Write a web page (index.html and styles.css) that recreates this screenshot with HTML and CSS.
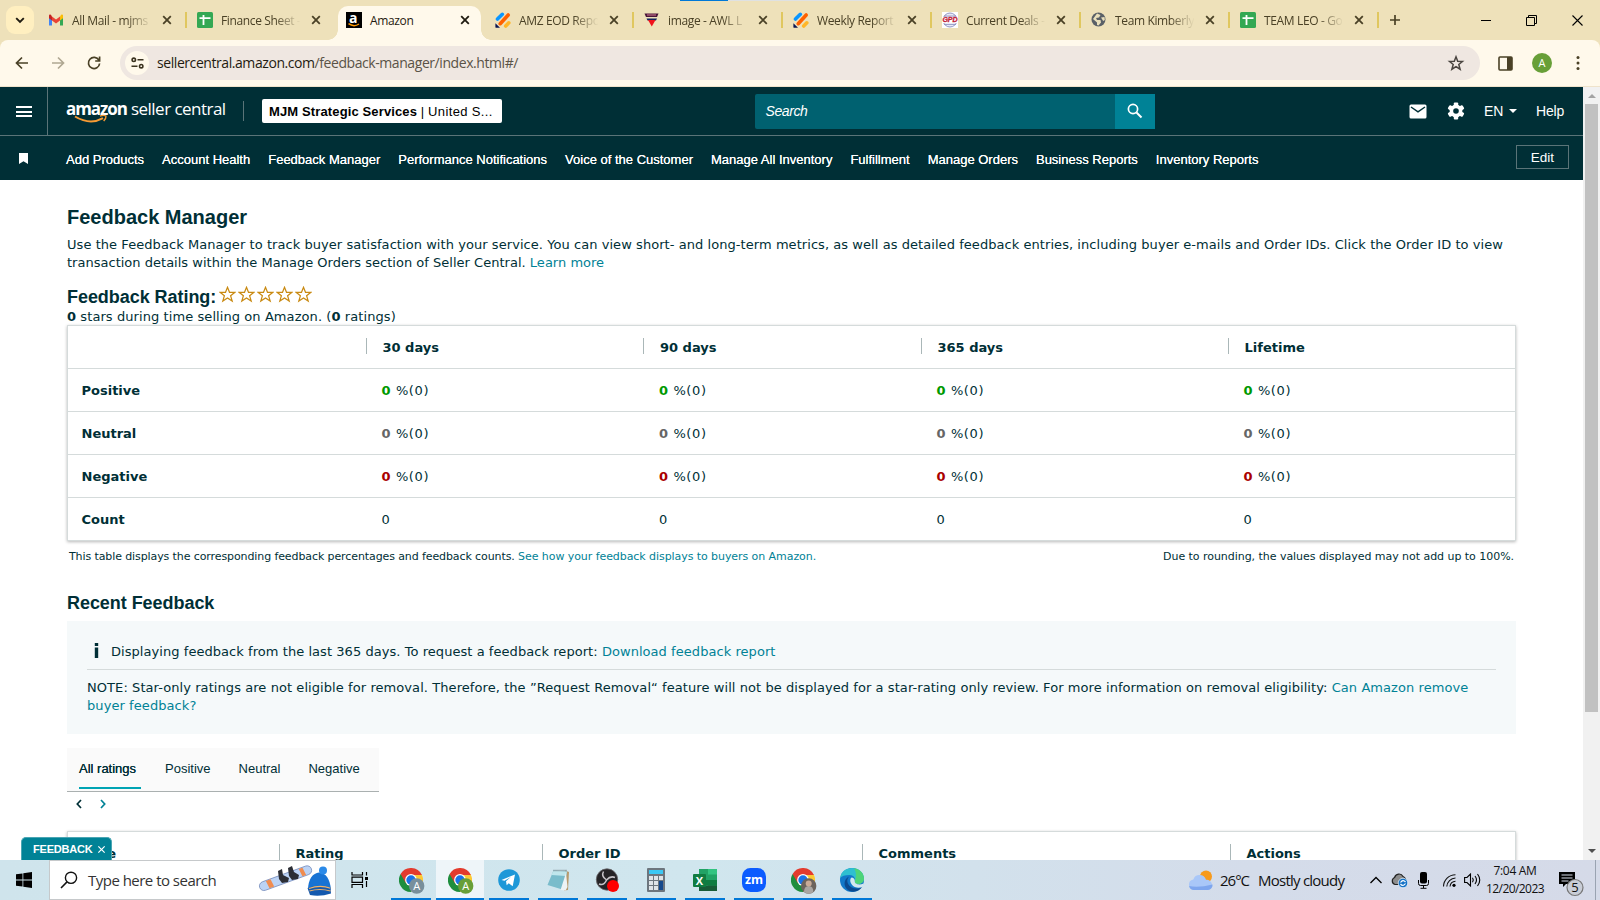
FILE: index.html
```html
<!DOCTYPE html>
<html lang="en">
<head>
<meta charset="utf-8">
<title>Amazon</title>
<link rel="stylesheet" href="styles.css">
</head>
<body>
<svg class="defs" aria-hidden="true">
  <symbol id="x" viewBox="0 0 10 10"><path d="M1.200 1.200l7.600 7.600M8.800 1.200L1.200 8.800" fill="none" stroke="currentColor" stroke-width="1.800"/></symbol>
  <symbol id="sheets" viewBox="0 0 16 16"><rect width="16" height="16" rx="1.500" fill="#34a853"/><path d="M6.500 3v10M2.500 6.200h11" stroke="#fff" stroke-width="1.800" fill="none"/></symbol>
  <symbol id="jot" viewBox="0 0 16 16"><g stroke-width="3.600" stroke-linecap="round" fill="none"><path d="M2.500 7L7.300 2.300" stroke="#0a96ff"/><path d="M5.200 11.700L13.200 3" stroke="#ff6100"/><path d="M10.700 14L13.800 10.800" stroke="#ffb629"/></g><path d="M.4 11.200L5 15.800H1.300a.9.9 0 0 1-.9-.9z" fill="#0a1551"/></symbol>
  <symbol id="star" viewBox="0 0 17 17"><path d="M8.500 1.300l2 5h5.400l-4.300 3.400 1.600 5.400-4.700-3.200-4.700 3.200 1.600-5.400L1.100 6.300h5.400z" fill="none" stroke="#c98a12" stroke-width="1.200"/></symbol>
  <symbol id="chrome" viewBox="0 0 24 24"><path d="M12 12V24A12 12 0 0 1 1.600 6z" fill="#1e8e3e"/><path d="M12 6h10.400A12 12 0 0 1 12 24l5-9z" fill="#fcc934"/><path d="M1.600 6L6.800 15 12 7h10.900A12 12 0 0 0 1.600 6z" fill="#e33b2e"/><circle cx="12" cy="12" r="5.900" fill="#fff"/><circle cx="12" cy="12" r="4.700" fill="#1a73e8"/></symbol>
</svg>

<div class="tabstrip">
  <div class="tabsearch"><svg width="10" height="7" viewBox="0 0 10 7"><path d="M1.200 1.200L5 5l3.800-3.800" fill="none" stroke="#1f1b10" stroke-width="1.900"/></svg></div>
  <div class="tab"><svg class="fav" viewBox="0 0 16 16"><path d="M1 3v10.500h3V6z" fill="#4285f4"/><path d="M15 3v10.500h-3V6z" fill="#34a853"/><path d="M1 3.500v2.800l3 2.200V4.500L3 3C2 2.200 1 2.500 1 3.500z" fill="#c5221f"/><path d="M4 4.500l4 3 4-3v4l-4 3-4-3z" fill="#ea4335"/><path d="M15 3.500v2.800l-3 2.200V4.500L13 3c1-.8 2-.5 2 .5z" fill="#fbbc04"/></svg><span class="name">All Mail - mjms</span><svg class="close"><use href="#x"/></svg></div>
  <div class="tab nosep"><svg class="fav"><use href="#sheets"/></svg><span class="name">Finance Sheet -</span><svg class="close"><use href="#x"/></svg></div>
  <div class="tab active"><svg class="fav" viewBox="0 0 16 16"><rect width="16" height="16" fill="#000"/><text x="3" y="10.800" class="fava">a</text><path d="M2.500 11.700q5.500 3.800 10.500.3" fill="none" stroke="#f90" stroke-width="1.500"/></svg><span class="name">Amazon</span><svg class="close"><use href="#x"/></svg></div>
  <div class="tab"><svg class="fav"><use href="#jot"/></svg><span class="name">AMZ EOD Repo</span><svg class="close"><use href="#x"/></svg></div>
  <div class="tab"><svg class="fav" viewBox="0 0 16 16"><path d="M.5 1.500h14L13 5H2z" fill="#4a1638"/><path d="M2.500 6.500h10.500L12 8.500H3.500z" fill="#14225c"/><path d="M4 8h7.500L7.800 14.500z" fill="#f0121c"/><path d="M3 3h9" stroke="#d77c94" stroke-width="1"/></svg><span class="name">image - AWL L</span><svg class="close"><use href="#x"/></svg></div>
  <div class="tab"><svg class="fav"><use href="#jot"/></svg><span class="name">Weekly Report</span><svg class="close"><use href="#x"/></svg></div>
  <div class="tab"><svg class="fav" viewBox="0 0 16 16"><rect width="16" height="16" fill="#fff"/><circle cx="8" cy="8" r="7" fill="#e9eaf6" stroke="#8a8fc0" stroke-width=".9"/><path d="M2 4h12M2 12.500h12" stroke="#8a8fc0" stroke-width=".8"/><rect y="5" width="16" height="6" fill="#fff"/><text x=".4" y="10.300" class="favg" textLength="15.200" lengthAdjust="spacingAndGlyphs">GPD</text></svg><span class="name">Current Deals -</span><svg class="close"><use href="#x"/></svg></div>
  <div class="tab"><svg class="fav" viewBox="0 0 16 16"><circle cx="7.500" cy="7.500" r="7" fill="#5a6067"/><path d="M6 1.500L9.500 3 8 5.500 5 6 6 8H9.500l.5 2.500-2.500 3-1.500-.5V10.500L2 7z" fill="#e9dfbb"/><path d="M10 5.500l3.500-.5.3 3-1.600 1z" fill="#e9dfbb"/></svg><span class="name">Team Kimberly</span><svg class="close"><use href="#x"/></svg></div>
  <div class="tab"><svg class="fav"><use href="#sheets"/></svg><span class="name">TEAM LEO - Go</span><svg class="close"><use href="#x"/></svg></div>
  <svg class="newtab" viewBox="0 0 10 10"><path d="M5 0v10M0 5h10" stroke="#4a4126" stroke-width="1.700"/></svg>
  <div class="winbtns">
    <svg width="10" height="10" viewBox="0 0 10 10"><path d="M0 5.500h10" stroke="#000"/></svg>
    <svg width="11" height="11" viewBox="0 0 11 11"><path d="M.5 2.500h8v8h-8zM2.500 2.500v-2h8v8h-2" fill="none" stroke="#000"/></svg>
    <svg width="11" height="11" viewBox="0 0 11 11"><path d="M.5.5l10 10M10.500.5l-10 10" stroke="#000" stroke-width="1.100"/></svg>
  </div>
  <div class="sharebar"><i></i></div>
</div>

<div class="toolbar">
  <svg class="nav" viewBox="0 0 16 16"><path d="M14 8H3M8 2.500L2.500 8 8 13.500" fill="none" stroke="#4a4126" stroke-width="1.700"/></svg>
  <svg class="nav" viewBox="0 0 16 16"><path d="M2 8h11M8 2.500L13.500 8 8 13.500" fill="none" stroke="#b0a892" stroke-width="1.700"/></svg>
  <svg class="nav" viewBox="0 0 16 16"><path d="M12.900 5.200A5.600 5.600 0 1 0 13.600 8.500M13.600 1.500V6H9.200" fill="none" stroke="#4a4126" stroke-width="1.700"/></svg>
  <div class="omnibox">
    <div class="tune"><svg width="13" height="12" viewBox="0 0 13 12"><g fill="none" stroke="#3b3320" stroke-width="1.600"><circle cx="2.800" cy="2.800" r="1.700"/><path d="M6.500 2.800H12.500M.5 9.200H6.500"/><circle cx="10.200" cy="9.200" r="1.700"/></g></svg></div>
    <div class="url">sellercentral.amazon.com<span>/feedback-manager/index.html#/</span></div>
    <svg class="bm" viewBox="0 0 16 16"><path d="M8 1.800l1.700 4.400 4.800.3-3.700 3 1.300 4.700L8 11.600l-4.100 2.600 1.300-4.700-3.700-3 4.800-.3z" fill="none" stroke="#4a4540" stroke-width="1.500"/></svg>
  </div>
  <svg class="panel" viewBox="0 0 15 15"><rect x="1" y="1" width="13" height="13" rx="1" fill="none" stroke="#4a4126" stroke-width="1.600"/><path d="M9 1h5v13H9z" fill="#4a4126"/></svg>
  <div class="avatar">A</div>
  <svg class="dots" viewBox="0 0 4 16"><g fill="#4a4126"><circle cx="2" cy="2.500" r="1.500"/><circle cx="2" cy="8" r="1.500"/><circle cx="2" cy="13.500" r="1.500"/></g></svg>
</div>

<div class="viewport">
  <div class="page">
    <header class="top">
      <div class="burger"><i></i><i></i><i></i></div>
      <div class="logo"><b>amazon</b><span>seller central</span><svg class="smile" viewBox="0 0 34 9"><path d="M1 1.500q15 9 28 1.700" fill="none" stroke="#f79b34" stroke-width="2"/><path d="M26 1q4-1.200 6 0 .3 2-2.300 5" fill="none" stroke="#f79b34" stroke-width="1.400"/></svg></div>
      <div class="account"><b>MJM Strategic Services</b> | <span>United S...</span></div>
      <div class="search"><em>Search</em><div class="go"><svg width="16" height="16" viewBox="0 0 16 16"><circle cx="6" cy="6" r="4.600" fill="none" stroke="#fff" stroke-width="1.700"/><path d="M9.500 9.500l5 5" stroke="#fff" stroke-width="2"/></svg></div></div>
      <div class="tools">
        <svg width="18" height="15" viewBox="0 0 18 15"><rect x=".5" y=".5" width="17" height="14" rx="1.500" fill="#fff"/><path d="M2 3l7 4.800L16 3" fill="none" stroke="#002f36" stroke-width="1.500"/></svg>
        <svg class="gear" width="18" height="18" viewBox="0 0 18 18"><g fill="#fff"><circle cx="9" cy="9" r="6.400"/><rect x="6.800" y=".5" width="4.400" height="17" rx="1"/><rect x="6.800" y=".5" width="4.400" height="17" rx="1" transform="rotate(60 9 9)"/><rect x="6.800" y=".5" width="4.400" height="17" rx="1" transform="rotate(120 9 9)"/></g><circle cx="9" cy="9" r="2.800" fill="#002f36"/></svg>
        <span class="lang">EN</span><i class="caret"></i><span class="help">Help</span>
      </div>
    </header>
    <nav class="links">
      <svg class="flag" viewBox="0 0 9 11"><path d="M0 0h9v11L4.500 8.300 0 11z" fill="#fff"/></svg>
      <a>Add Products</a><a>Account Health</a><a>Feedback Manager</a><a>Performance Notifications</a><a>Voice of the Customer</a><a>Manage All Inventory</a><a>Fulfillment</a><a>Manage Orders</a><a>Business Reports</a><a>Inventory Reports</a>
      <span class="edit">Edit</span>
    </nav>
    <main>
      <h1>Feedback Manager</h1>
      <p class="intro"><span class="l1">Use the Feedback Manager to track buyer satisfaction with your service. You can view short- and long-term metrics, as well as detailed feedback entries, including buyer e-mails and Order IDs. Click the Order ID to view</span><br><span class="l2">transaction details within the Manage Orders section of Seller Central. <a>Learn more</a></span></p>
      <div class="rating"><h2>Feedback Rating:</h2><svg><use href="#star"/></svg><svg><use href="#star"/></svg><svg><use href="#star"/></svg><svg><use href="#star"/></svg><svg><use href="#star"/></svg></div>
      <p class="stars"><b>0</b> stars during time selling on Amazon. (<b>0</b> ratings)</p>
      <section class="grid summary">
        <div class="row head"><span></span><b>30 days</b><b>90 days</b><b>365 days</b><b>Lifetime</b></div>
        <div class="row pos"><b>Positive</b><span><b>0</b> %(0)</span><span><b>0</b> %(0)</span><span><b>0</b> %(0)</span><span><b>0</b> %(0)</span></div>
        <div class="row neu"><b>Neutral</b><span><b>0</b> %(0)</span><span><b>0</b> %(0)</span><span><b>0</b> %(0)</span><span><b>0</b> %(0)</span></div>
        <div class="row neg"><b>Negative</b><span><b>0</b> %(0)</span><span><b>0</b> %(0)</span><span><b>0</b> %(0)</span><span><b>0</b> %(0)</span></div>
        <div class="row"><b>Count</b><span>0</span><span>0</span><span>0</span><span>0</span></div>
      </section>
      <div class="notes"><span>This table displays the corresponding feedback percentages and feedback counts. <a>See how your feedback displays to buyers on Amazon.</a></span><span class="r">Due to rounding, the values displayed may not add up to 100%.</span></div>
      <h2 class="recent">Recent Feedback</h2>
      <section class="info">
        <p class="i1"><svg width="5" height="15" viewBox="0 0 5 15"><path d="M.8 0h3.400v3H.8zM.8 4.500h3.400V15H.8z" fill="#002f36"/></svg><span>Displaying feedback from the last 365 days. To request a feedback report: <a>Download feedback report</a></span></p>
        <p class="i2">NOTE: Star-only ratings are not eligible for removal. Therefore, the ”Request Removal“ feature will not be displayed for a star-rating only review. For more information on removal eligibility: <a>Can Amazon remove<br>buyer feedback?</a></p>
      </section>
      <div class="filters"><span class="on">All ratings</span><span>Positive</span><span>Neutral</span><span>Negative</span></div>
      <div class="pager"><svg viewBox="0 0 6 10"><path d="M5 1L1.300 5 5 9" fill="none" stroke="#002f36" stroke-width="1.700"/></svg><svg viewBox="0 0 6 10"><path d="M1 1l3.700 4L1 9" fill="none" stroke="#008296" stroke-width="1.700"/></svg></div>
      <section class="grid list">
        <div class="row head"><b>Date</b><b>Rating</b><b>Order ID</b><b>Comments</b><b>Actions</b></div>
      </section>
    </main>
    <div class="fb">FEEDBACK <svg viewBox="0 0 10 10"><path d="M1.500 1.500l7 7M8.500 1.500l-7 7" stroke="#fff" stroke-width="1.300"/></svg></div>
  </div>
  <div class="scroll"><i class="up"></i><div class="thumb"></div><i class="down"></i></div>
</div>

<footer class="taskbar">
  <div class="start"><svg width="16" height="16" viewBox="0 0 16 16"><path d="M0 2.300l6.500-.9v6.200H0zM7.300 1.300L16 0v7.600H7.300zM0 8.400h6.500v6.200L0 13.700zM7.300 8.400H16V16l-8.700-1.200z" fill="#000"/></svg></div>
  <div class="find">
    <svg width="18" height="18" viewBox="0 0 18 18"><circle cx="11" cy="6.800" r="5.600" fill="none" stroke="#111" stroke-width="1.400"/><path d="M7 10.900L1 17" stroke="#111" stroke-width="1.500"/></svg>
    <span>Type here to search</span>
    <svg class="snow" width="74" height="34" viewBox="0 0 74 34"><g transform="rotate(-20 27 15)"><rect x="-1" y="10.500" width="55" height="9" rx="4.500" fill="#bcd3f5" stroke="#6f86b8" stroke-width=".7"/><path d="M7 11h5l1 8H8zM42 11h4l1 8h-4z" fill="#f08c50"/></g><path d="M19 8l4-2 1 6 6 3-1 4-6 1-3-4zM29 5l4-2 2 6 5 3-1 4-6 1-3-4z" fill="#2c2e35"/><path d="M49 27C49 16 54 10 60 9.500c7 .3 11 7 12 17z" fill="#1873d4"/><circle cx="64" cy="7.500" r="4" fill="#2b8ae8"/><path d="M48.500 25q11-4 23-.5l.5 6q-11 3.500-21 1.500z" fill="#1459ae"/><path d="M50 25.500q11-4 21.500-.3M50.500 28q10-3 21 0" fill="none" stroke="#f0b46c" stroke-width="1.200"/></svg>
  </div>
  <div class="taskview"><svg width="17" height="16" viewBox="0 0 17 16"><path d="M1 0v3h10.500V0M1 16v-3.500h10.500V16M1 5.200h10.500v5.200H1zM15.500 0v3.500M15.500 9v6" fill="none" stroke="#000" stroke-width="1.200"/><rect x="14" y="5" width="3" height="3"/></svg></div>
  <div class="apps">
    <div class="app"><svg viewBox="0 0 26 26"><use href="#chrome" x="1" y="0" width="24" height="24"/><circle cx="18.700" cy="18" r="7.700" fill="#788f9b"/><text x="18.700" y="21.500" class="badge">A</text></svg></div>
    <div class="app cur"><svg viewBox="0 0 26 26"><use href="#chrome" x="1" y="0" width="24" height="24"/><circle cx="18.700" cy="18" r="7.700" fill="#689f38"/><text x="18.700" y="21.500" class="badge">A</text></svg></div>
    <div class="app"><svg viewBox="0 0 26 26"><circle cx="13" cy="12" r="10.800" fill="#1d98d8"/><path d="M5.500 12L19 6.500l-2.300 11.800-4-3-2 2-.7-4 5-4.500-6.500 4z" fill="#fff"/></svg></div>
    <div class="app"><svg viewBox="0 0 26 26"><path d="M20 2.500l4 1.500-1 18-4 .5z" fill="#b89a6c"/><path d="M8.500 2.500L22 3.500 19 22 2.500 17z" fill="#79bccb"/><path d="M8.500 2.500L22 3.500 21 8 6.500 7z" fill="#bfe6ec"/><path d="M21 5l-5.500 17 5 .5L22.500 19z" fill="#edf3f5"/><path d="M8.500 2.500h13.500" stroke="#667b80" stroke-width="1.500" stroke-dasharray="1 1"/></svg></div>
    <div class="app"><svg viewBox="0 0 26 26"><circle cx="13" cy="11.500" r="10.700" fill="#252326" stroke="#69676b" stroke-width=".8"/><g fill="none" stroke="#c7c3c8" stroke-width="1.500"><path d="M9.500 3.500q-2.500 4.500 2.500 8M21 9.500q-4.500-2-8.500 2.500M5 16q5 2 7.500-4"/></g><circle cx="19" cy="18" r="6" fill="#f00"/></svg></div>
    <div class="app"><svg viewBox="0 0 26 26"><rect x="4" y="0" width="18" height="24" rx="1" fill="#6d767e"/><rect x="6" y="2" width="14" height="4" fill="#3cc8f4"/><g fill="#dfe4e8"><path d="M6 8h4v4H6zM11 8h4v4h-4zM16 8h4v4h-4zM6 13h4v4H6zM11 13h4v4h-4zM6 18h4v4H6zM11 18h4v4h-4z"/></g><path d="M16 13h4v9h-4z" fill="#15498c"/></svg></div>
    <div class="app"><svg viewBox="0 0 26 26"><path d="M7 1h18v22H7z" fill="#21a366"/><path d="M16 1h9v5.500h-9z" fill="#33c481"/><path d="M16 12h9v5.500h-9zM7 12h9v5H7z" fill="#107c41"/><path d="M7 17.500h18V23H7z" fill="#185c37"/><rect x="1" y="6" width="13" height="13" rx="1" fill="#107c41"/><text x="7.500" y="16.500" class="xl">X</text></svg></div>
    <div class="app"><svg viewBox="0 0 26 26"><rect x="1" y="0" width="24" height="24" rx="8.500" fill="#0b5cff"/><text x="4" y="15.800" class="zm" textLength="18" lengthAdjust="spacingAndGlyphs">zm</text></svg></div>
    <div class="app"><svg viewBox="0 0 26 26"><use href="#chrome" x="1" y="0" width="24" height="24"/><circle cx="18.700" cy="18" r="7.700" fill="#6b635c"/><path d="M14 24q0-6 4.700-6t4.700 6a7.700 7.700 0 0 1-9.400 0z" fill="#a9a6a2"/><circle cx="18.700" cy="15.500" r="3" fill="#c9ab97"/></svg></div>
    <div class="app"><svg viewBox="0 0 26 26"><circle cx="13" cy="12" r="12" fill="#1278c9"/><path d="M1.200 10C2 3.500 7 0 13 0c7 0 12 5 12 10.500 0 4-3 5.500-6 5.500-2.500 0-3.500-1-3.500-2 1.500-2.500 0-7-5-7C6 7 2.500 8 1.200 10z" fill="#2fbfd0"/><path d="M15 .2C21 1 25 5.500 25 10.500c0 4-3 5.500-6 5.500-2.500 0-3.500-1-3.500-2C17 10 18 5 15 .2z" fill="#53d769" opacity=".85"/><path d="M10 8.500c-4 4-1 12.500 9 12q3 0 4.500-2C20 24 13 25 9 22 4 18.500 4.500 11 10 8.500z" fill="#0c4a8f"/><path d="M15.800 13c-.5 3 4 4.500 8.800 2.500q.6 1.500-1.300 3.500-2.800 1-5.500.6C12 18.500 9.500 12 12.500 9.500c2 0 3.300 1.500 3.300 3.500z" fill="#d4e8ee"/></svg></div>
  </div>
  <div class="weather"><svg width="26" height="21" viewBox="0 0 26 21"><circle cx="18" cy="6.500" r="6" fill="#f79a1c"/><path d="M6 20a5.300 5.300 0 0 1-.7-10.500A6.700 6.700 0 0 1 18 9.800 5.200 5.200 0 0 1 20 20z" fill="#a9c7f8"/><path d="M6 20a5.300 5.300 0 0 1-4.900-4q9 2 23.500-1.500A5.200 5.200 0 0 1 20 20z" fill="#7ea6ee"/></svg><span class="deg">26°C</span><span class="cond">Mostly cloudy</span></div>
  <div class="tray">
    <svg width="12" height="8" viewBox="0 0 12 8"><path d="M.5 7L6 1.500 11.500 7" fill="none" stroke="#000" stroke-width="1.300"/></svg>
    <svg width="17" height="15" viewBox="0 0 17 15"><path d="M4 11.500A3.700 3.700 0 0 1 3.600 4.500a4.500 4.500 0 0 1 8.400-1 4 4 0 0 1 2.500 5L12 11.500z" fill="#8c8c8c" stroke="#222" stroke-width="1.200"/><circle cx="12" cy="10" r="4.800" fill="#1673c7" stroke="#fff" stroke-width=".7"/><path d="M9.500 9.500q2.500-3.500 5-.5M14.500 10.500q-2.500 3.500-5 .5" fill="none" stroke="#fff" stroke-width="1.200"/></svg>
    <svg width="11" height="17" viewBox="0 0 11 17"><rect x="2" y="0" width="7" height="11.500" rx="2" fill="#000"/><path d="M.5 8v3.500q0 2 2 2h6q2 0 2-2V8M5.500 13.500V16M2.500 16.300h6" fill="none" stroke="#000"/></svg>
    <svg width="13" height="13" viewBox="0 0 13 13"><g fill="none" stroke="#111" stroke-width="1.100"><path d="M.5 12.500A12 12 0 0 1 12.500.7M3.800 12.500A9 9 0 0 1 12.500 4M7 12.500a6 6 0 0 1 5.500-5.200"/></g><circle cx="11" cy="11.300" r="1.600"/></svg>
    <svg width="17" height="14" viewBox="0 0 17 14"><g fill="none" stroke="#000" stroke-width="1.100"><path d="M.6 4.500H3L6.500 1v12L3 9.500H.6zM8.500 4.800q1.600 2.200 0 4.400M11 3q3 4 0 8M13.500 1q4.500 6 0 12"/></g></svg>
  </div>
  <div class="clock"><span class="t">7:04 AM</span><span class="d">12/20/2023</span></div>
  <div class="notif"><svg width="25" height="25" viewBox="0 0 25 25"><path d="M0 0h16v12H7l-3 3v-3H0z" fill="#000"/><path d="M2.500 3h11M2.500 6h11M2.500 9h7" stroke="#d5dbe8" stroke-width="1.200"/><circle cx="16" cy="15.500" r="8" fill="#c9cdd6" stroke="#777" stroke-width="1.200"/><text x="16" y="20" class="n5">5</text></svg></div>
</footer>
</body>
</html>
```
FILE: styles.css
```css
*{box-sizing:border-box}
body{margin:0;width:1600px;height:900px;overflow:hidden;display:flex;flex-direction:column;font-family:"DejaVu Sans",sans-serif;background:#fff;color:#002f36}
h1,h2,p{margin:0}
svg{display:block;flex:none;overflow:visible}
.defs{position:absolute;width:0;height:0}
a{color:#008296}

/* browser tabs */
.tabstrip{position:relative;z-index:1;height:40px;flex:none;background:#eee1ba;display:flex;align-items:center;font-family:"Open Sans",sans-serif;font-size:12px;letter-spacing:-.36px;color:#4a4126}
.tabsearch{width:28px;height:28px;margin:0 3px 0 6px;border-radius:9px;background:#ffefc0;display:flex;align-items:center;justify-content:center}
.tab{position:relative;width:149px;height:34px;flex:none;margin-top:6px;padding:0 14px 6px 11px;display:flex;align-items:center}
.tab:not(.active):not(.nosep):after{content:"";position:absolute;right:-1px;top:6px;width:2px;height:16px;background:#e0c75f}
.fav{width:16px;height:16px;margin-right:8px}
.name{width:82px;flex:none;white-space:nowrap;-webkit-mask-image:linear-gradient(90deg,#000 66%,transparent 97%);mask-image:linear-gradient(90deg,#000 66%,transparent 97%)}
.close{width:10px;height:10px;margin-left:8px;color:#4a4126}
.active{background:#fff9eb;border-radius:10px 10px 0 0;color:#1f1b10;width:143px;margin-left:3px;margin-right:3px;padding-left:8px}
.active .name{-webkit-mask-image:none;mask-image:none}
.active .close{color:#1f1b10;margin-left:8px}
.active:before,.active:after{content:"";position:absolute;bottom:0;width:10px;height:10px}
.active:before{left:-10px;background:radial-gradient(circle at 0 0,transparent 9.5px,#fff9eb 10px)}
.active:after{right:-10px;background:radial-gradient(circle at 100% 0,transparent 9.5px,#fff9eb 10px)}
.fava{font:bold 14px "Open Sans",sans-serif;fill:#fff;letter-spacing:0}
.favg{font:italic bold 6.5px "Liberation Sans",sans-serif;fill:#c21f3a;stroke:#c21f3a;stroke-width:.3px;letter-spacing:0}
.newtab{width:10px;height:10px;margin-left:12px}
.winbtns{margin-left:auto;display:flex;align-items:center;gap:35px;padding-right:17.5px}
.sharebar{position:absolute;left:680px;top:0;width:241px;height:1px;background:#dfe1e2}
.sharebar i{display:block;width:48px;height:1px;background:#0078d7}

/* address bar */
.toolbar{height:47px;flex:none;background:#fff9eb;border-bottom:1px solid #efe3cb;border-radius:8px 8px 0 0;display:flex;align-items:center;padding:0 20px 0 14px;box-shadow:0 -8px 0 #eee1ba}
.toolbar .nav{width:16px;height:16px;margin-right:20px}
.omnibox{width:1360px;height:34px;margin-left:-2px;border-radius:17px;background:#efe7e1;display:flex;align-items:center;padding:0 16px 0 5px}
.tune{width:24px;height:24px;border-radius:50%;background:#fff9eb;display:flex;align-items:center;justify-content:center;margin-right:8px}
.url{flex:1;font:14px/20px "Open Sans",sans-serif;letter-spacing:-.43px;color:#1f1b10}
.url span{color:#5a5347}
.bm{width:16px;height:16px}
.panel{width:15px;height:15px;margin-left:18px}
.avatar{width:20px;height:20px;margin-left:19px;border-radius:50%;background:#689f38;color:#fff;font:11px/20px "Open Sans",sans-serif;text-align:center}
.dots{width:4px;height:16px;margin-left:auto}

/* page shell */
.viewport{height:773px;flex:none;display:flex}
.page{position:relative;width:1583px;height:773px;overflow:hidden}
.scroll{width:17px;background:#f1f1f1;display:flex;flex-direction:column;align-items:center;padding:7px 0}
.scroll i{border:4px solid transparent;border-top:0;border-bottom:4px solid #a3a3a3}
.scroll .thumb{width:13px;height:608px;background:#c1c1c1;margin-top:6px}
.scroll .down{margin-top:auto;border-bottom:0;border-top:4px solid #505050}

.top{height:49px;background:#002f36;border-bottom:1px solid #5a7478;display:flex;align-items:center;color:#fff;font-family:"Liberation Sans",Arial,sans-serif}
.burger{width:48px;height:48px;border-right:1px solid #5a7478;padding:19px 15px 18px 16px;display:flex;flex-direction:column;justify-content:space-between}
.burger i{height:2px;background:#fff}
.logo{position:relative;display:flex;width:178px;height:20px;margin:-1px 18px 0 18px;border-right:1px solid #5a7478;font:17px/15px "Open Sans",sans-serif;white-space:nowrap}
.logo b{width:65px;letter-spacing:-1.05px}
.logo span{letter-spacing:-.53px}
.smile{position:absolute;left:8px;top:14px;width:34px;height:9px}
.account{width:240px;height:24px;background:#fff;color:#000;border-radius:2px;padding-left:7px;font-size:13px;line-height:25px;letter-spacing:.13px}
.account span{letter-spacing:.35px}
.search{width:400px;height:35px;margin-left:253px;background:#006170;display:flex;justify-content:space-between;align-items:center;padding-left:10.5px;border-radius:2px;font-size:14px;letter-spacing:-.39px}
.go{width:40px;height:35px;background:#008296;display:flex;align-items:center;justify-content:center}
.tools{flex:1;display:flex;align-items:center;padding-left:254px;font-size:14px;letter-spacing:-.2px}
.gear{margin-left:20px}
.lang{margin-left:19px}
.caret{border:4.5px solid transparent;border-top-color:#fff;margin:4px 0 0 6px}
.help{margin-left:19px}
.links{height:44px;background:#002f36;display:flex;align-items:center;color:#fff;font:13px/16px "Liberation Sans",Arial,sans-serif;gap:18px}
.links a{color:#fff;text-shadow:0 0 .5px #fff;margin-top:3px}
.flag{width:9px;height:11px;margin:0 20px 0 19px}
.edit{margin:-2px 14px 0 auto;width:53px;height:24px;border:1px solid #5a7478;text-align:center;line-height:23px;font-size:13.5px}

/* content */
main{padding:0 67px}
h1{font:bold 20px/24px "Liberation Sans",Arial,sans-serif;margin-top:25px}
h2{font:bold 18px/22px "Liberation Sans",Arial,sans-serif;letter-spacing:-.05px}
p,.grid{font-size:13px;line-height:18px;white-space:nowrap}
.intro{margin-top:7px}
.l1{letter-spacing:.059px}
.l2{letter-spacing:.014px}
.rating{display:flex;height:22px;margin-top:14px}
.rating svg{width:17px;height:17px;margin:0 0 0 2px}
.rating h2{width:150px}
.stars{margin-top:1px;letter-spacing:.08px;line-height:16px}
.grid{width:1449px;border:1px solid #d5dbdb;box-shadow:0 1px 3px rgba(0,0,0,.28)}
.row{display:grid;grid-template-columns:297px 277.5px 277.5px 307px 1fr;height:43px;align-items:center;padding:2px 0 0 13.5px;border-top:1px solid #d5dbdb}
.row:first-child{border-top:0;height:42px}
.row>:not(:first-child){margin-left:3px}
.row>span{letter-spacing:.6px}
.head>:not(:first-child){position:relative;margin-left:4px}
.head>:not(:first-child):before{content:"";position:absolute;left:-17px;top:-1px;width:1px;height:16px;background:#aab7b8}
.pos span b{color:#090}
.neu span b{color:#666}
.neg span b{color:#a00}
.notes{display:flex;justify-content:space-between;font-size:11px;line-height:14px;padding:0 2px;margin-top:9px;letter-spacing:-.1px}
.notes a{letter-spacing:-.067px}
.notes .r{letter-spacing:-.04px}
.recent{margin-top:28px}
.info{height:113px;width:1449px;margin-top:7px;background:#f5f9fa;padding:21px 20px 0}
.i1{display:flex;align-items:center;border-bottom:1px solid #d5dbdb;height:28px;padding-bottom:7px;padding-left:7px;letter-spacing:.054px}
.i1 svg{margin:-3px 12px 0 0}
.i2{margin-top:9px;letter-spacing:.073px}
.filters{display:flex;width:312px;height:44px;margin-top:14px;background:#fafafa;border-bottom:1px solid #aab0b0;padding-left:12px;font:13px/15px "Liberation Sans",Arial,sans-serif;white-space:nowrap}
.filters span{flex:none;padding-top:13px;height:42px;margin-right:28px}
.filters span:last-child{margin-right:0}
.filters .on{width:62px;margin-right:24px;border-bottom:2px solid #00a4b4;text-shadow:0 0 .6px #002f36;height:41px}
.pager{display:flex;gap:18px;padding:7px 0 0 9px}
.pager svg{width:6px;height:10px}
.list{margin-top:22px;height:60px}
.list .row{grid-template-columns:210px 263px 320px 367px 1fr;height:42px}
.list .row b:last-child{left:1px}
.fb{position:absolute;left:21px;top:750px;width:91px;height:24px;background:#008296;border:1px solid #4aa5b3;border-bottom:0;border-radius:5px 5px 0 0;color:#fff;font:bold 11px/23px "Liberation Sans",Arial,sans-serif;letter-spacing:-.2px;padding-left:11px;display:flex;align-items:center;gap:4px}
.fb svg{width:9px;height:9px}

/* taskbar */
.taskbar{height:40px;flex:none;display:flex;align-items:center;background:linear-gradient(90deg,#cfe4ec 0,#d0e6ee 700px,#d4dcea 1250px,#d5dae8);font-family:"Open Sans",sans-serif;color:#111}
.start{width:49px;padding-left:16px}
.find{width:287px;height:40px;background:#fff;border:1px solid #c6c9cb;display:flex;align-items:center;font-size:15px;padding-left:10px}
.find span{margin-left:10px;width:171px;letter-spacing:-.52px;color:#333}
.taskview{padding-left:15px;width:55px}
.apps{display:flex;height:40px}
.app{width:40px;height:40px;margin-right:9px;border-bottom:2px solid #0078d7;padding:8px 7px 0}
.app svg{width:26px;height:26px}
.app.cur{width:48px;margin:0 4px 0 -4px;padding-left:11px;background:#eef5f9}
.app:first-child+.app+.app{margin-left:1px}
.badge{font:11px "Open Sans",sans-serif;fill:#fff;text-anchor:middle}
.xl{font:bold 11px "Open Sans",sans-serif;fill:#fff;text-anchor:middle}
.zm{font:bold 12px "Open Sans",sans-serif;fill:#fff}
.weather{display:flex;align-items:center;margin-left:auto;width:182px;font-size:15px}
.deg{margin-left:6px;letter-spacing:-1px;width:38px}
.cond{letter-spacing:-.76px}
.tray{display:flex;align-items:center;gap:12px;width:125px}
.tray svg:nth-child(2){margin:0 -2px 0 -3px}
.tray svg:nth-child(4){margin:0 -4px 0 2px}
.clock{display:flex;flex-direction:column;align-items:center;width:72px;font-size:12px;line-height:18px;padding-bottom:1px;margin-left:-16px}
.t{letter-spacing:-.32px}
.d{letter-spacing:-.57px}
.notif{width:45px;height:40px;padding:12px 0 0 8px;margin-right:4px;border-right:1px solid #9aa3b1}
.n5{font:13px "Open Sans",sans-serif;fill:#111;text-anchor:middle}
```
